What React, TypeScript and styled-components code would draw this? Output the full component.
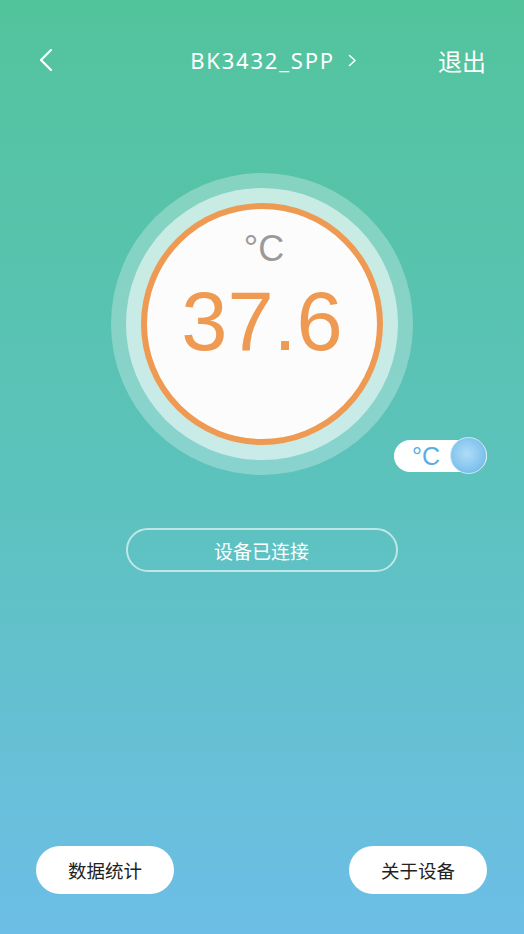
import React from "react";
import styled, { createGlobalStyle } from "styled-components";

const Global = createGlobalStyle`
  html, body { margin: 0; padding: 0; }
  body { font-family: "Noto Sans", "Noto Sans CJK SC", sans-serif; }
`;

const Page = styled.div`
  width: 524px;
  height: 934px;
  display: flex;
  flex-direction: column;
  background: linear-gradient(180deg, #52c49c 0%, #5dc2bf 55%, #6dbee7 100%);
  overflow: hidden;
`;

const Header = styled.header`
  margin-top: 36px;
  height: 48px;
  display: flex;
  align-items: center;
  justify-content: space-between;
  padding: 0 38px 0 39px;
  color: #fff;
`;

const IconButton = styled.button`
  background: none;
  border: none;
  padding: 0;
  width: 44px;
  height: 44px;
  display: flex;
  align-items: center;
  justify-content: flex-start;
  cursor: pointer;
`;

const Title = styled.div`
  display: flex;
  align-items: center;
  gap: 13px;
  font-family: "Noto Sans", sans-serif;
  font-size: 22px;
  letter-spacing: 1.8px;
  color: #fff;
  margin-left: 26px;
`;

const Exit = styled.div`
  font-family: "Noto Sans CJK SC", sans-serif;
  font-size: 24px;
  color: #fff;
`;

const GaugeWrap = styled.div`
  margin-top: 89px;
  display: flex;
  justify-content: center;
`;

const Ring = styled.div<{ $size: number; $bg: string }>`
  width: ${(p) => p.$size}px;
  height: ${(p) => p.$size}px;
  border-radius: 50%;
  background: ${(p) => p.$bg};
  display: flex;
  align-items: center;
  justify-content: center;
  box-sizing: border-box;
`;

const Face = styled.div`
  width: 242px;
  height: 242px;
  border-radius: 50%;
  background: #fcfcfc;
  border: 6px solid #ef9a52;
  box-sizing: border-box;
  display: flex;
  flex-direction: column;
  align-items: center;
  font-family: "Liberation Sans", Arial, sans-serif;
`;

const Unit = styled.div`
  margin-top: 20px;
  font-size: 36px;
  line-height: 40px;
  color: #9a9a9a;
  margin-left: 4px;
`;

const Value = styled.div`
  margin-top: 8px;
  font-size: 83px;
  line-height: 90px;
  color: #ef9a52;
`;

const ToggleRow = styled.div`
  margin-top: -37px;
  display: flex;
  justify-content: flex-end;
  padding-right: 37px;
`;

const Toggle = styled.div`
  position: relative;
  width: 93px;
  height: 32px;
  border-radius: 16px;
  background: #ffffff;
  display: flex;
  align-items: center;
  padding-left: 18px;
  box-sizing: border-box;
  font-family: "Liberation Sans", Arial, sans-serif;
  font-size: 25px;
  color: #5aaee2;
  margin-top: 2px;
`;

const Knob = styled.div`
  position: absolute;
  right: 0;
  top: -3px;
  width: 37px;
  height: 37px;
  border-radius: 50%;
  box-sizing: border-box;
  border: 1.5px solid #cde9f2;
  background: radial-gradient(circle at 45% 45%, #b0dcf6 0%, #8ac8f0 50%, #64b1e6 100%);
`;

const StatusRow = styled.div`
  margin-top: 56px;
  display: flex;
  justify-content: center;
`;

const Status = styled.div`
  width: 272px;
  height: 44px;
  box-sizing: border-box;
  border: 2px solid rgba(255, 255, 255, 0.6);
  border-radius: 22px;
  display: flex;
  align-items: center;
  justify-content: center;
  font-family: "Noto Sans CJK SC", sans-serif;
  font-size: 19px;
  color: #fff;
  margin-left: -1px;
`;

const Footer = styled.footer`
  margin-top: auto;
  margin-bottom: 40px;
  display: flex;
  justify-content: space-between;
  padding: 0 37px 0 36px;
`;

const PillButton = styled.button`
  width: 138px;
  height: 48px;
  border-radius: 24px;
  border: none;
  background: #fff;
  font-family: "Noto Sans CJK SC", sans-serif;
  font-size: 18.5px;
  color: #222;
  cursor: pointer;
  padding: 0;
`;

export default function App() {
  return (
    <>
      <Global />
      <Page>
        <Header>
          <IconButton aria-label="back">
            <svg width="14" height="22" viewBox="0 0 14 22">
              <path d="M12 1 L2 11 L12 21" fill="none" stroke="#fff" strokeWidth="2.2" strokeLinecap="round" strokeLinejoin="round" />
            </svg>
          </IconButton>
          <Title>
            BK3432_SPP
            <svg width="9" height="13" viewBox="0 0 9 13">
              <path d="M1.5 1.5 L7 6.5 L1.5 11.5" fill="none" stroke="#fff" strokeWidth="1.6" strokeLinecap="round" strokeLinejoin="round" />
            </svg>
          </Title>
          <Exit>退出</Exit>
        </Header>

        <GaugeWrap>
          <Ring $size={302} $bg="rgba(255,255,255,0.28)">
            <Ring $size={272} $bg="rgba(255,255,255,0.55)">
              <Ring $size={242} $bg="transparent">
                <Face>
                  <Unit>°C</Unit>
                  <Value>37.6</Value>
                </Face>
              </Ring>
            </Ring>
          </Ring>
        </GaugeWrap>

        <ToggleRow>
          <Toggle>
            °C
            <Knob />
          </Toggle>
        </ToggleRow>

        <StatusRow>
          <Status>设备已连接</Status>
        </StatusRow>

        <Footer>
          <PillButton>数据统计</PillButton>
          <PillButton>关于设备</PillButton>
        </Footer>
      </Page>
    </>
  );
}
